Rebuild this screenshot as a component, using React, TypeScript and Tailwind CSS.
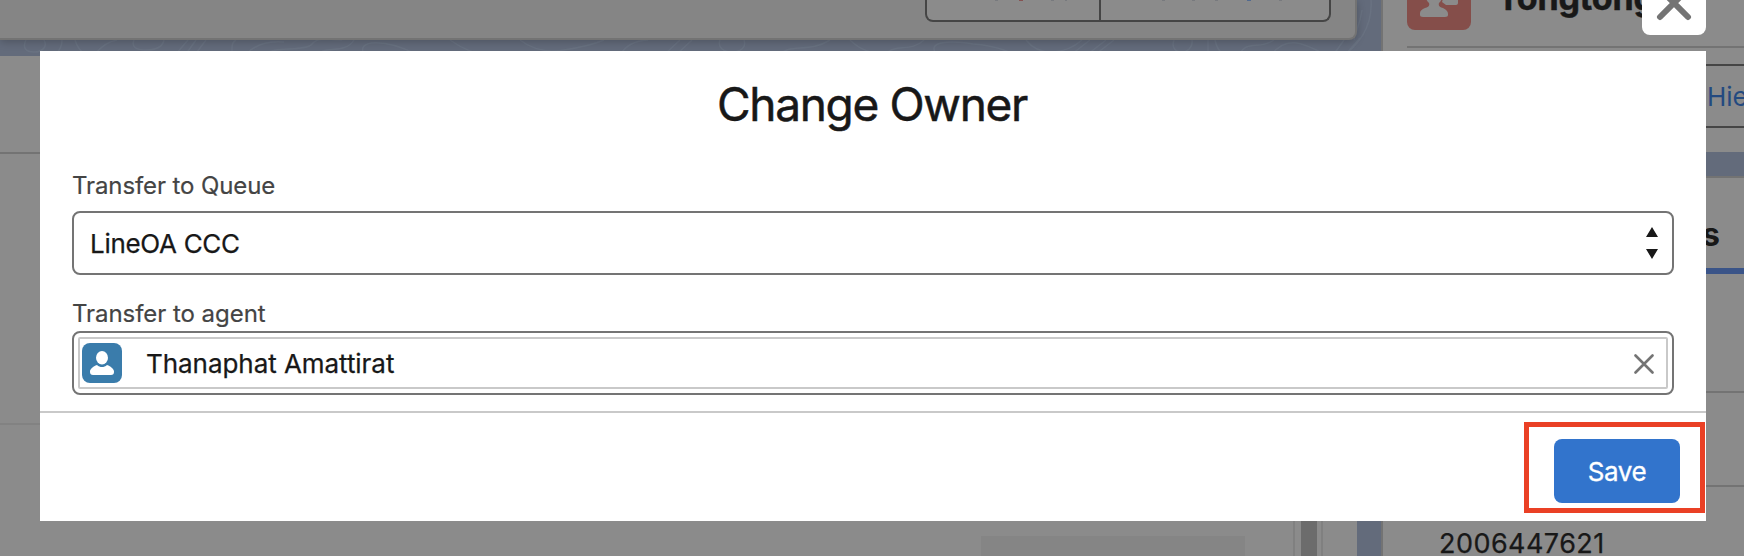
function Topography() {
  return (
    <svg className="absolute inset-0" width="1744" height="60" fill="none" stroke="#7a8494" strokeOpacity="0.28" strokeWidth="1.5">
      <path d="M26 40c-4 8 0 12 8 12s14-5 10-12M62 40q0 8-6 14M75 40q3 10 10 14M95 54q10-12 22-14M134 40q-4 10 12 10t18-10M176 54l12-14M186 54l10-14M206 40l-12 16M232 56v-8q0-6 4-8M246 54q14-14 38-12M266 54c6-8 40-2 46-10s20-4 30-4M318 54c6-8 28 0 36-14M364 54c-8-14 20-16 52 0M450 40q20 14 38 15" />
      <path d="M520 40q18 14 44 10t40-10M620 55q8-14 28-15M664 55l16-15M676 55l16-15M720 40c-6 16 30 16 24 0M780 55c8-12 30-2 50-15M850 40q14 14 36 14M888 52c8-8 24 0 36-12M935 52c-6-10 14-12 38-8 28 2 40 10 42 12M1026 40c14 18 40 14 56 0M1072 54l18-14M1088 54l18-14M1096 54l18-14M1174 40c-6 16 20 16 18 0M1208 40v14M1215 40q2 10 8 14M1240 54c6-14 20-4 34-14M1272 54c14-18 30-12 52 0M1334 54l10-14M1346 54l14-16M1371 0c2 30-16 46-24 53M1362 10c-2 14-6 20-8 30" />
    </svg>
  );
}

function Workspace() {
  return (
    <main className="flex w-[1357px] shrink-0 flex-col">
      <header className="relative mb-4 flex h-10 shrink-0 justify-end rounded-br-lg border-r-2 border-b-2 border-[#737373] bg-[#858585] pr-6 shadow-[0_2px_8px_rgba(0,0,0,0.22)]">
        <div className="relative flex h-[22px] w-[406px] rounded-b-lg border-2 border-t-0 border-[#454545] bg-[#8b8b8b]">
          <div className="w-[174px] border-r-2 border-[#454545]" />
          <svg className="absolute top-0 left-0" width="402" height="2">
            <path d="M68 0h3M124 0h3M138 0h2M235 0h3M265 0h3M288 0h3M352 0h3" stroke="#666b73" strokeWidth="1" />
            <path d="M92 0h4" stroke="#853f3f" strokeWidth="1.5" />
            <path d="M320 0h4" stroke="#3f5f91" strokeWidth="1.5" />
          </svg>
        </div>
      </header>
      <section className="relative flex grow bg-[#8b8b8b]">
        <div className="flex w-[1293px] flex-col">
          <div className="h-[98px] border-b-2 border-[#737373]" />
          <div className="h-[271px] border-b-2 border-[#828282]" />
          <div className="mt-[111px] ml-[981px] w-[264px] grow bg-[#858585]" />
        </div>
        <div className="w-2 border-l-2 border-[#808080]" />
        <div className="w-4 bg-[#6c6c6c]" />
        <div className="w-[6px] border-r-2 border-[#808080]" />
      </section>
    </main>
  );
}

function RecordPanel() {
  return (
    <aside className="relative ml-6 flex grow flex-col">
      <section className="flex h-[152px] shrink-0 flex-col border-l-2 border-[#737373] bg-[#8b8b8b]">
        <div className="ml-6 flex h-12 shrink-0 items-start border-b-2 border-[#737373]">
          <svg className="-mt-[34px] size-16 shrink-0" viewBox="0 0 64 64">
            <rect width="64" height="64" rx="8" fill="#854e4a" />
            <path d="M27 18c7 0 9 5 9 10 0 4-2 7-4 9-1 3 1 4 4 5 4 2 5 4 5 6v1c0 1-1 2-3 2H16c-2 0-3-1-3-2v-2c0-2 2-4 5-5 3-1 5-2 4-5-2-2-4-5-4-9 0-5 3-10 9-10Z" fill="#8b8b8b" />
            <path d="M38 26h13v11c0 1-1 2-2 2H39l-4-3Z" fill="#8b8b8b" />
          </svg>
          <h2 className="-mt-[22px] ml-[26px] text-[34px] leading-10 font-bold tracking-[-0.005em] [-webkit-text-stroke:0.5px]">Tongtong</h2>
        </div>
        <div className="mt-4 flex h-16 items-center justify-end border-y-2 border-[#454545] pt-[2px] pl-[323px]">
          <span className="w-[37px] overflow-hidden text-[26px] leading-8 whitespace-nowrap text-[#234a80]">Hie</span>
        </div>
      </section>
      <section className="mt-6 flex grow flex-col border-t-2 border-l-2 border-[#737373] bg-[#8b8b8b]">
        <div className="flex h-24 shrink-0 items-end justify-end border-b-[6px] border-[#3a5488] pr-6 pb-[13px]">
          <span className="text-[32px] leading-10 font-bold">s</span>
        </div>
        <div className="h-[119px] shrink-0 border-b-2 border-[#737373]" />
        <div className="h-[94px] shrink-0 border-b-2 border-[#737373]" />
        <p className="mt-[41px] ml-14 text-[27px] leading-8 tracking-[0.45px] [-webkit-text-stroke:0.25px]">2006447621</p>
      </section>
    </aside>
  );
}

function ChangeOwnerDialog() {
  return (
    <div className="absolute top-[51px] left-10 flex h-[470px] w-[1666px] flex-col bg-white">
      <div className="flex h-[362px] flex-col border-b-2 border-[#c9c9c9] px-8 pt-[25px]">
        <h1 className="pr-[2px] text-center text-[46px] leading-[56px] tracking-[-0.029em] [-webkit-text-stroke:0.5px]">Change Owner</h1>
        <label className="mt-[38px] text-2xl leading-8 tracking-[-0.1px] text-[#444] [-webkit-text-stroke:0.2px]">Transfer to Queue</label>
        <div className="mt-[9px] flex h-16 shrink-0 items-center justify-between rounded-lg border-2 border-[#747474] pr-[14px] pl-4">
          <span className="pt-[2px] text-[26px] leading-8 tracking-[-0.3px] [-webkit-text-stroke:0.25px]">LineOA CCC</span>
          <svg width="12" height="32" viewBox="0 0 12 32" fill="#181818">
            <path d="M6 0l6 10H0ZM0 22h12l-6 10Z" />
          </svg>
        </div>
        <label className="mt-[23px] text-2xl leading-8 tracking-[-0.05px] text-[#444] [-webkit-text-stroke:0.2px]">Transfer to agent</label>
        <div className="mt-px h-16 shrink-0 rounded-lg border-2 border-[#747474] p-1">
          <div className="flex h-[52px] items-center rounded-xs border-2 border-[#c9c9c9] pr-3 pl-[2px]">
            <svg width="40" height="40" viewBox="0 0 40 40">
              <rect width="40" height="40" rx="8" fill="#3a7cab" />
              <ellipse cx="20" cy="14.8" rx="6" ry="6.8" fill="#fff" />
              <path d="M15 22c3 2.700 7 2.700 10 0 4 1.500 7 4 7 6.500V29c0 2-1 3-3 3H11c-2 0-3-1-3-3v-.5c0-2.500 3-5 7-6.500Z" fill="#fff" />
            </svg>
            <span className="ml-6 grow pt-[2px] text-[26px] leading-8 tracking-[-0.05px] [-webkit-text-stroke:0.25px]">Thanaphat Amattirat</span>
            <svg className="mt-[2px]" width="20" height="20" viewBox="0 0 20 20" stroke="#747474" strokeWidth="2.600" strokeLinecap="round">
              <path d="M1.500 1.500l17 17M18.500 1.500l-17 17" />
            </svg>
          </div>
        </div>
      </div>
      <footer className="flex grow justify-end pt-[9px] pr-px">
        <div className="flex h-[91px] w-[181px] justify-end border-[5px] border-[#ea4025] pt-3 pr-5">
          <button className="h-16 w-[126px] rounded-lg bg-[#3274cc] pt-[2px] text-[26px] leading-8 tracking-[-0.4px] text-white [-webkit-text-stroke:0.3px]">Save</button>
        </div>
      </footer>
    </div>
  );
}

export default function App() {
  return (
    <div className="relative h-[556px] w-full overflow-hidden bg-[#636b7b] font-['Inter',sans-serif] text-[#181818]">
      <Topography />
      <div className="flex h-full">
        <Workspace />
        <RecordPanel />
      </div>
      <ChangeOwnerDialog />
      <button className="absolute -top-[29px] left-[1642px] flex size-16 items-center justify-center rounded-lg bg-white">
        <svg width="36" height="36" viewBox="0 0 36 36" stroke="#747474" strokeWidth="6" strokeLinecap="round">
          <path d="M4 4l28 28M32 4L4 32" />
        </svg>
      </button>
    </div>
  );
}
